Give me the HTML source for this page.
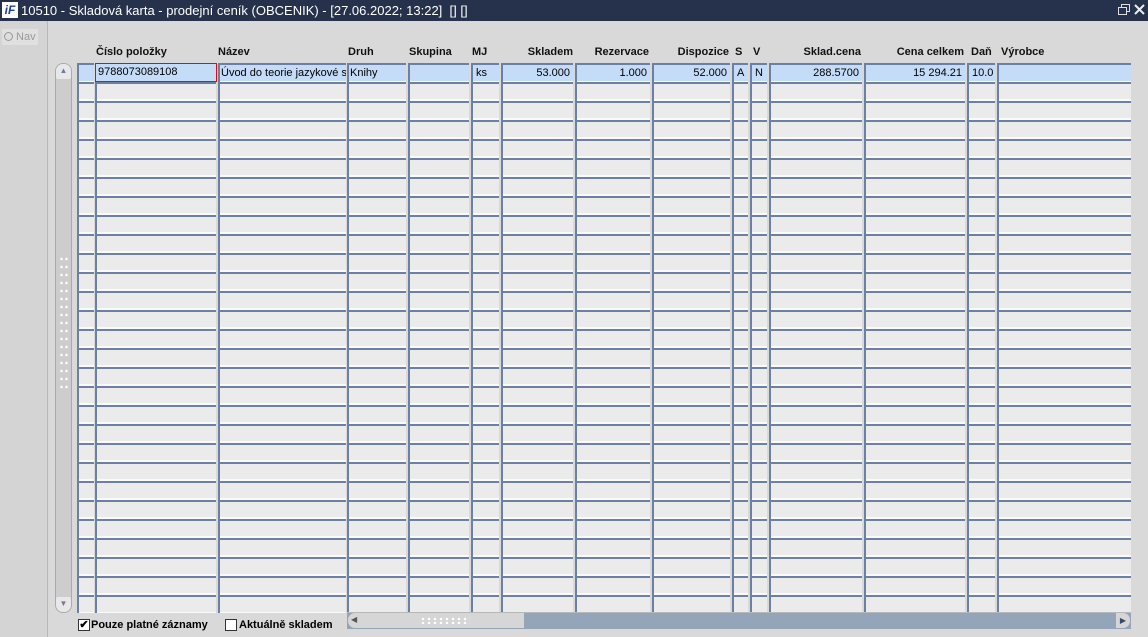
<!DOCTYPE html>
<html><head><meta charset="utf-8"><style>
*{margin:0;padding:0;box-sizing:border-box}
body{width:1148px;height:637px;overflow:hidden;background:#d9d9d9;font-family:"Liberation Sans",Arial,sans-serif;font-size:11px;position:relative}
.a{position:absolute}
.title{left:0;top:0;width:1148px;height:21px;background:#26324b;color:#fff;font-size:13px;line-height:21px}
.col{position:absolute;top:63px;height:550px;background:
linear-gradient(to right,#6b80a3 0 2px,transparent 2px),
repeating-linear-gradient(to bottom,#6b80a3 0 2px,#ebebeb 2px 17px,#fafafa 17px 19px);}
.h{position:absolute;top:46px;font-weight:bold;font-size:11px;color:#111}
.c{position:absolute;top:65px;height:16px;background:#c4dcf7;line-height:16px;font-size:11px;padding:0 3px;white-space:nowrap;overflow:hidden;color:#000}
.r{text-align:right}
</style></head><body>
<div class="a title"><div class="a" style="left:2px;top:2px;width:16px;height:16px;background:#fff;color:#1d3ea8;font-weight:bold;font-style:italic;font-size:12px;line-height:16px;text-align:center">iF</div><span style="position:absolute;left:21px;white-space:nowrap">10510 - Skladová karta - prodejní ceník (OBCENIK) - [27.06.2022; 13:22]&nbsp; [] []</span>
<svg class="a" style="left:1118px;top:4px" width="12" height="12"><rect x="3.5" y="0.5" width="8" height="7" fill="none" stroke="#ddd"/><rect x="0.5" y="3.5" width="8" height="7" fill="#26324b" stroke="#ddd"/></svg>
<svg class="a" style="left:1134px;top:4px" width="11" height="11"><path d="M1 1L10 10M10 1L1 10" stroke="#eee" stroke-width="2"/></svg></div>
<div class="a" style="left:0;top:21px;width:48px;height:616px;background:#d4d4d4;border-right:1px solid #b8b8b8"></div>
<div class="a" style="left:2px;top:29px;width:36px;height:16px;background:#e0e0e0;color:#999;font-size:11px;line-height:16px;padding-left:2px;white-space:nowrap"><span style="display:inline-block;width:9px;height:9px;border-radius:50%;border:1px solid #999;background:#ddd;vertical-align:-1px"></span> Nav</div>
<div class="a" style="left:55px;top:63px;width:17px;height:550px;background:#cdcdcd;border:1px solid #aaa;border-radius:8px"></div>
<div class="a" style="left:56px;top:64px;width:15px;height:15px;background:#e8e8e8;border-radius:7px 7px 2px 2px;color:#6b7e9c;font-size:8px;text-align:center;line-height:14px">▲</div>
<div class="a" style="left:56px;top:597px;width:15px;height:15px;background:#e8e8e8;border-radius:2px 2px 7px 7px;color:#6b7e9c;font-size:8px;text-align:center;line-height:14px">▼</div>
<div class="a" style="left:59px;top:255px;width:10px;height:135px;background:radial-gradient(circle,#fff 1px,transparent 1.5px) 0 0/5px 8px"></div>

<div class="col" style="left:77px;width:17px"></div>
<div class="col" style="left:95px;width:121px"></div>
<div class="col" style="left:218px;width:128px"></div>
<div class="col" style="left:347px;width:59px"></div>
<div class="col" style="left:408px;width:61px"></div>
<div class="col" style="left:471px;width:28px"></div>
<div class="col" style="left:501px;width:72px"></div>
<div class="col" style="left:575px;width:75px"></div>
<div class="col" style="left:652px;width:78px"></div>
<div class="col" style="left:732px;width:16px"></div>
<div class="col" style="left:750px;width:17px"></div>
<div class="col" style="left:769px;width:93px"></div>
<div class="col" style="left:864px;width:101px"></div>
<div class="col" style="left:967px;width:28px"></div>
<div class="col" style="left:997px;width:134px"></div>

<div class="h" style="left:96px">Číslo položky</div>
<div class="h" style="left:218px">Název</div>
<div class="h" style="left:348px">Druh</div>
<div class="h" style="left:409px">Skupina</div>
<div class="h" style="left:472px">MJ</div>
<div class="h" style="left:501px;width:72px;text-align:right">Skladem</div>
<div class="h" style="left:575px;width:74px;text-align:right">Rezervace</div>
<div class="h" style="left:652px;width:77px;text-align:right">Dispozice</div>
<div class="h" style="left:735px">S</div>
<div class="h" style="left:753px">V</div>
<div class="h" style="left:769px;width:92px;text-align:right">Sklad.cena</div>
<div class="h" style="left:864px;width:100px;text-align:right">Cena celkem</div>
<div class="h" style="left:971px">Daň</div>
<div class="h" style="left:1001px">Výrobce</div>

<div class="c" style="left:79px;width:15px"></div>
<div class="c" style="left:95px;top:63px;height:19px;width:121px;line-height:19px">9788073089108</div>
<div class="a" style="left:95px;top:63px;width:122px;height:19px;border:1px solid #ff0000"></div>
<div class="c" style="left:220px;width:126px;padding-left:1px">Úvod do teorie jazykové s</div>
<div class="c" style="left:349px;width:57px;padding-left:1px">Knihy</div>
<div class="c" style="left:410px;width:59px"></div>
<div class="c" style="left:473px;width:26px">ks</div>
<div class="c r" style="left:503px;width:70px">53.000</div>
<div class="c r" style="left:577px;width:73px">1.000</div>
<div class="c r" style="left:654px;width:76px">52.000</div>
<div class="c" style="left:734px;width:14px">A</div>
<div class="c" style="left:752px;width:15px">N</div>
<div class="c r" style="left:771px;width:91px">288.5700</div>
<div class="c r" style="left:866px;width:99px">15 294.21</div>
<div class="c" style="left:969px;width:26px">10.0</div>
<div class="c" style="left:999px;width:132px"></div>

<div class="a" style="left:347px;top:612px;width:784px;height:17px;background:#94a5b9;border-top:1px solid #b8b8b8"></div>
<div class="a" style="left:348px;top:613px;width:176px;height:15px;background:#d6d6d6;border-radius:7px 0 0 7px"></div>
<div class="a" style="left:351px;top:615px;color:#555;font-size:8px">◀</div>
<div class="a" style="left:420px;top:617px;width:50px;height:7px;background:radial-gradient(circle,#fff 1px,transparent 1.5px) 0 0/6px 4px"></div>
<div class="a" style="left:1116px;top:613px;width:14px;height:15px;background:#d6d6d6;border-radius:0 7px 7px 0;color:#38486a;font-size:8px;line-height:15px;text-align:center">▶</div>

<div class="a" style="left:78px;top:619px;width:12px;height:12px;background:#fff;border:1px solid #333;font-size:11px;line-height:10px;text-align:center;font-weight:bold">✔</div>
<div class="a" style="left:91px;top:619px;font-weight:bold;font-size:11px">Pouze platné záznamy</div>
<div class="a" style="left:225px;top:619px;width:12px;height:12px;background:#fff;border:1px solid #333"></div>
<div class="a" style="left:239px;top:619px;font-weight:bold;font-size:11px">Aktuálně skladem</div>
</body></html>
